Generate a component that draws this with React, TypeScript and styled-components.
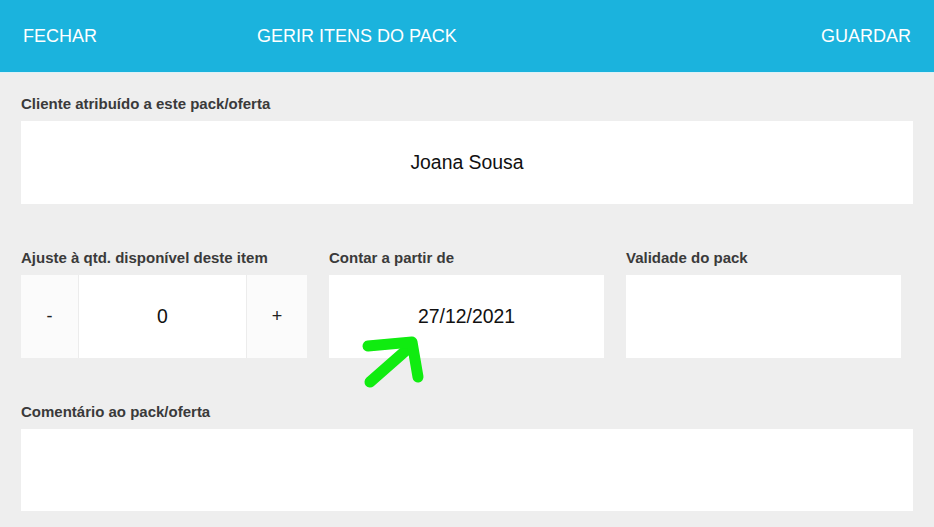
import React, { useState } from "react";
import styled, { createGlobalStyle } from "styled-components";

const GlobalStyle = createGlobalStyle`
  html, body {
    margin: 0;
    padding: 0;
    background: #eeeeee;
    font-family: "Liberation Sans", Arial, sans-serif;
  }
`;

const Page = styled.div`
  width: 934px;
  height: 527px;
  overflow: hidden;
  background: #eeeeee;
`;

const TopBar = styled.header`
  height: 71px;
  padding: 0 23px 1px;
  background: #1bb3dd;
  border-bottom: 1px solid #dcf1f7;
  display: grid;
  grid-template-columns: 234px 1fr auto;
  align-items: center;
  color: #fff;
  font-size: 18px;
  text-transform: uppercase;
`;

const BarButton = styled.button`
  background: none;
  border: none;
  padding: 0;
  color: inherit;
  font: inherit;
  text-transform: uppercase;
  text-align: left;
  cursor: pointer;
  line-height: 20px;
`;

const BarTitle = styled.span`
  line-height: 20px;
`;

const Content = styled.main`
  padding: 23px 21px 0;
  display: flex;
  flex-direction: column;
  gap: 46px;
`;

const Row = styled.div`
  display: grid;
  grid-template-columns: 286px 275px 275px;
  column-gap: 22px;
`;

const Field = styled.div<{ $wide?: boolean }>`
  display: flex;
  flex-direction: column;
  width: ${(p) => (p.$wide ? "892px" : "auto")};
  position: relative;
`;

const Label = styled.label`
  font-size: 15px;
  font-weight: bold;
  color: #3a3a3a;
  line-height: 16px;
  margin-bottom: 9px;
`;

const Box = styled.div<{ $h?: number }>`
  height: ${(p) => p.$h ?? 83}px;
  background: #fff;
  display: flex;
  align-items: center;
  justify-content: center;
  font-size: 19.4px;
  color: #111;
`;

const Stepper = styled.div`
  height: 83px;
  display: grid;
  grid-template-columns: 57px 1fr 60px;
  column-gap: 1px;
  background: #ececec;
`;

const StepButton = styled.button`
  border: none;
  background: #fbfbfb;
  color: #222;
  font-family: "Liberation Sans", Arial, sans-serif;
  font-size: 18px;
  padding: 0;
  cursor: pointer;
`;

const StepValue = styled.div`
  background: #fff;
  display: flex;
  align-items: center;
  justify-content: center;
  font-size: 19.4px;
  color: #111;
`;

const Arrow = styled.svg`
  position: absolute;
  left: 31px;
  top: 82px;
  pointer-events: none;
`;

export default function App() {
  const [qty, setQty] = useState(0);

  return (
    <Page>
      <GlobalStyle />
      <TopBar>
        <BarButton>Fechar</BarButton>
        <BarTitle>Gerir itens do pack</BarTitle>
        <BarButton>Guardar</BarButton>
      </TopBar>
      <Content>
        <Field $wide>
          <Label>Cliente atribuído a este pack/oferta</Label>
          <Box>Joana Sousa</Box>
        </Field>
        <Row>
          <Field>
            <Label>Ajuste à qtd. disponível deste item</Label>
            <Stepper>
              <StepButton onClick={() => setQty((q) => q - 1)}>-</StepButton>
              <StepValue>{qty}</StepValue>
              <StepButton onClick={() => setQty((q) => q + 1)}>+</StepButton>
            </Stepper>
          </Field>
          <Field>
            <Label>Contar a partir de</Label>
            <Box>27/12/2021</Box>
            <Arrow width="70" height="60" viewBox="0 0 70 60">
              <g
                fill="none"
                stroke="#10ec10"
                strokeWidth="11"
                strokeLinecap="round"
                strokeLinejoin="round"
              >
                <path d="M10 50 L51 14" />
                <path d="M8 14 L52 10 L58 45" />
              </g>
            </Arrow>
          </Field>
          <Field>
            <Label>Validade do pack</Label>
            <Box />
          </Field>
        </Row>
        <Field $wide>
          <Label>Comentário ao pack/oferta</Label>
          <Box $h={82} />
        </Field>
      </Content>
    </Page>
  );
}
